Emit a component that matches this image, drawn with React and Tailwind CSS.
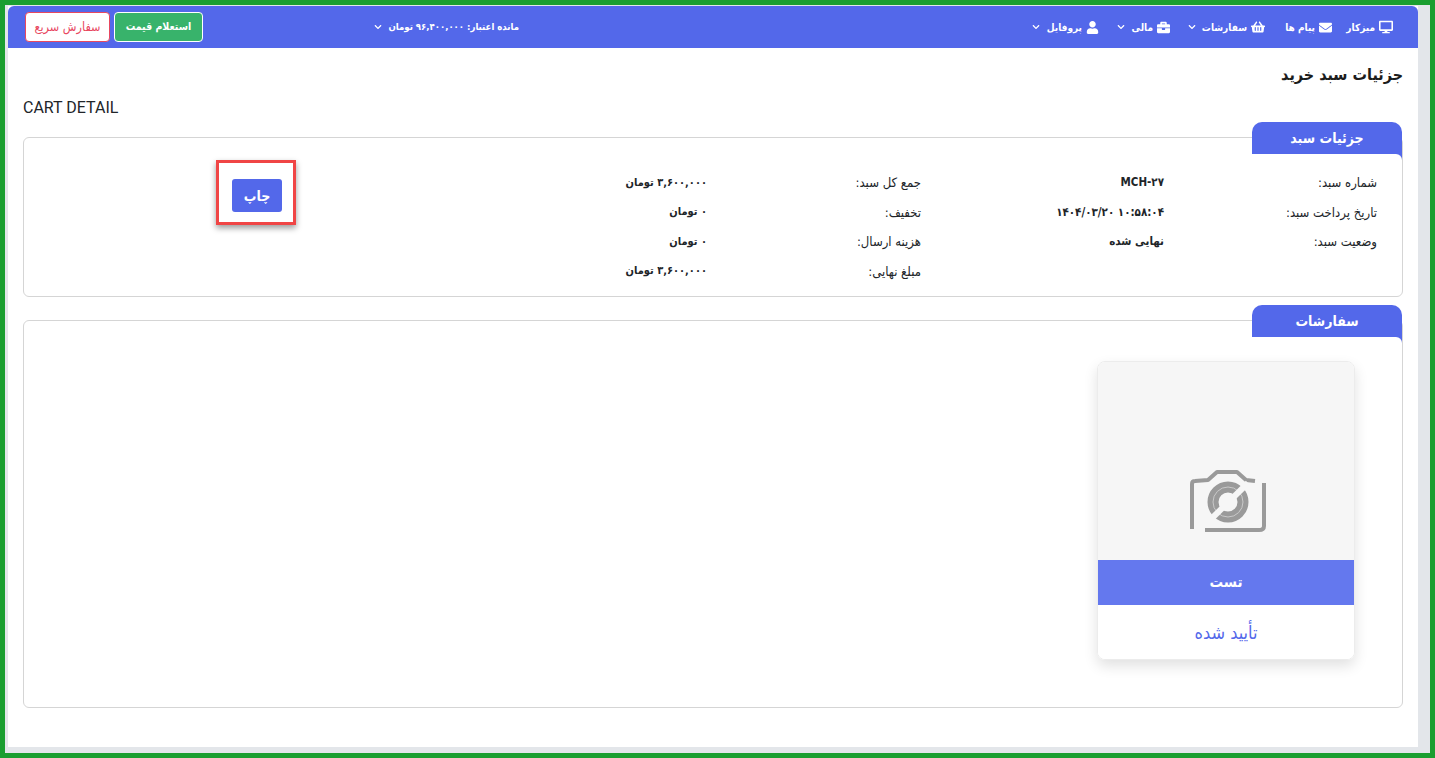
import React from 'react';
import { FaDesktop, FaEnvelope, FaShoppingBasket, FaBriefcase, FaUser, FaChevronDown } from 'react-icons/fa';

const menu = [
  { name: 'میزکار', icon: FaDesktop, iconSize: 14, width: 'w-[43px]' },
  { name: 'پیام ها', icon: FaEnvelope, iconSize: 13, width: 'w-[49px]' },
  { name: 'سفارشات', icon: FaShoppingBasket, iconSize: 14, arrow: true, width: 'w-[77px]' },
  { name: 'مالی', icon: FaBriefcase, iconSize: 13, arrow: true, width: 'w-[53px]' },
  { name: 'پروفایل', icon: FaUser, iconSize: 13, arrow: true, width: 'w-[67px]' },
];

const details = [
  [['شماره سبد:', 'MCH-۲۷'], ['جمع کل سبد:', '۳,۶۰۰,۰۰۰ تومان']],
  [['تاریخ پرداخت سبد:', <span dir="ltr">۱۴۰۴/۰۳/۲۰ ۱۰:۵۸:۰۴</span>], ['تخفیف:', '۰ تومان']],
  [['وضعیت سبد:', 'نهایی شده'], ['هزینه ارسال:', '۰ تومان']],
  [['', ''], ['مبلغ نهایی:', '۳,۶۰۰,۰۰۰ تومان']],
];

const Tab = ({ title }) => (
  <div className="absolute -top-4 right-0 w-[150px] h-8 bg-[#5368ea] rounded-t-[10px] text-white text-[14px] font-bold flex items-center justify-center">
    {title}
    <div className="absolute top-full right-0 w-4 h-[6px] bg-[#5368ea]">
      <div className="w-full h-full bg-white rounded-tr-[14px]"></div>
    </div>
  </div>
);

const CameraPlaceholder = () => (
  <svg width="76" height="62" viewBox="0 0 76 62" fill="none" stroke="#9a9a9a" strokeWidth="4">
    <path d="M2 59V14q0-3 3-3l13-1 9-8h20l9 8 9 1" strokeLinejoin="round" />
    <path d="M15 60h54q5 0 5-4V13" strokeLinejoin="round" />
    <circle cx="38" cy="32" r="15" strokeWidth="11" />
    <circle cx="38" cy="32" r="15" strokeWidth="1" stroke="#c9c9c9" />
    <path d="M58 13 17 53" stroke="#f6f6f6" strokeWidth="6" />
  </svg>
);

export default function App() {
  return (
    <div dir="rtl" className="h-[758px] w-[1435px] overflow-hidden border-[5px] border-[#1a9e30] bg-[#e3e6ea] text-[#212529] font-['DejaVu_Sans_Condensed','DejaVu_Sans',sans-serif]">
      <div className="ml-[3px] mr-3 mt-px h-[741px] w-[1410px] bg-white">
        <nav className="flex h-[42px] items-center rounded-t-[6px] bg-[#5368ea] text-[10px] font-bold text-white">
          <ul className="mr-[25px] flex items-center gap-[18px]">
            {menu.map((item) => (
              <li key={item.name} className={`flex items-center gap-1 whitespace-nowrap ${item.width}`}>
                <item.icon size={item.iconSize} className="shrink-0" />
                <span>{item.name}</span>
                {item.arrow && <FaChevronDown size={8} className="mr-auto shrink-0" />}
              </li>
            ))}
          </ul>
          <div className="mr-auto flex w-[145px] items-center justify-between whitespace-nowrap text-[9.5px] font-bold">
            <span>مانده اعتبار: ۹۶,۴۰۰,۰۰۰ تومان</span>
            <FaChevronDown size={8} className="shrink-0" />
          </div>
          <div className="mr-[171px] ml-[17px] flex items-center gap-1">
            <button className="flex h-[30px] w-[89px] items-center justify-center rounded border border-white bg-[#38b36b] text-[10.5px] font-bold text-white">
              استعلام قیمت
            </button>
            <button className="flex h-[30px] w-[85px] items-center justify-center rounded border border-[#e8475f] bg-white text-[12.5px] font-normal text-[#e8475f]">
              سفارش سریع
            </button>
          </div>
        </nav>

        <div className="px-[15px]">
          <h1 className="pt-[17px] text-base font-bold leading-5 text-[#1c1c1c]">جزئیات سبد خرید</h1>
          <p dir="ltr" className="mt-[13px] font-['Roboto',sans-serif] text-base leading-5">CART DETAIL</p>

          <section className="relative mt-[19px] h-40 rounded-[6px] border border-[#d5d5d5]">
            <Tab title="جزئیات سبد" />
            <div className="flex pt-[30px] pr-[25px]">
              <div className="w-[800px] shrink-0 whitespace-nowrap text-[13px]">
                {details.map((row, i) => (
                  <div key={i} className="flex h-[29.5px] items-center">
                    <span className="w-[213px] shrink-0">{row[0][0]}</span>
                    <b className="w-[243px] shrink-0 text-[11.5px] font-bold">{row[0][1]}</b>
                    <span className="w-[214px] shrink-0">{row[1][0]}</span>
                    <b className="text-[11px] font-bold">{row[1][1]}</b>
                  </div>
                ))}
              </div>
              <div className="flex flex-1 justify-end pl-[192px]">
                <div className="-mt-2 flex h-[65px] w-20 items-center justify-center border-[3px] border-[#f04545] bg-white pt-[6px] pl-[2px] shadow-[0_3px_6px_rgba(0,0,0,0.4)]">
                  <button className="flex h-[33px] w-[50px] items-center justify-center rounded-[3px] bg-[#5368ea] text-sm font-bold text-white">
                    چاپ
                  </button>
                </div>
              </div>
            </div>
          </section>

          <section className="relative mt-[23px] h-[388px] rounded-[6px] border border-[#d5d5d5]">
            <Tab title="سفارشات" />
            <div className="mr-[47px] mt-10 h-[299px] w-[258px] overflow-hidden rounded-[8px] border border-[#ececec] shadow-[0_6px_14px_rgba(0,0,0,0.12)]">
              <div className="flex h-[198px] items-center justify-center bg-[#f6f6f6] pt-[79px] pl-1">
                <CameraPlaceholder />
              </div>
              <div className="flex h-[45px] items-center justify-center bg-[#6478ee] text-[15px] font-bold text-white">تست</div>
              <div className="flex h-[55px] items-center justify-center bg-white text-lg text-[#5368ea]">تأیید شده</div>
            </div>
          </section>
        </div>
      </div>
    </div>
  );
}
